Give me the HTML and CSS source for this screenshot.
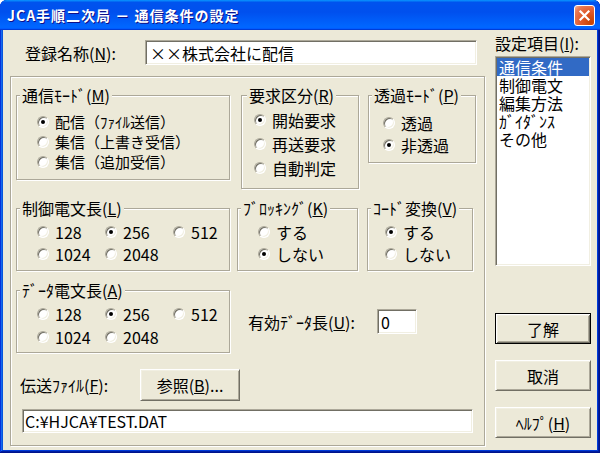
FILE: index.html
```html
<!DOCTYPE html>
<html lang="ja">
<head>
<meta charset="utf-8">
<title>JCA手順二次局 － 通信条件の設定</title>
<link rel="stylesheet" href="styles.css">
</head>
<body>
<div class="window">
  <div class="titlebar">
    <span class="title">JCA手順二次局 － 通信条件の設定</span>
    <span class="close"><svg width="13" height="13" viewBox="0 0 13 13"><path d="M2.5 2.5 L10.5 10.5 M10.5 2.5 L2.5 10.5" stroke="#fff" stroke-width="2.2" stroke-linecap="square" fill="none"/></svg></span>
  </div>
  <div class="client">
    <div class="main">
      <div class="name-row">
        <span class="name-label">登録名称(<u>N</u>):</span>
        <div class="field name-field">××株式会社に配信</div>
      </div>
      <div class="panel">
        <div class="grow">
          <div class="group g-mode">
            <div class="gtitle">通信ﾓｰﾄﾞ(<u>M</u>)</div>
            <div class="opts">
              <div class="opt"><span class="radio on"></span>配信（ﾌｧｲﾙ送信）</div>
              <div class="opt"><span class="radio"></span>集信（上書き受信）</div>
              <div class="opt"><span class="radio"></span>集信（追加受信）</div>
            </div>
          </div>
          <div class="group g-req">
            <div class="gtitle">要求区分(<u>R</u>)</div>
            <div class="opts">
              <div class="opt"><span class="radio on"></span>開始要求</div>
              <div class="opt"><span class="radio"></span>再送要求</div>
              <div class="opt"><span class="radio"></span>自動判定</div>
            </div>
          </div>
          <div class="group g-trans">
            <div class="gtitle">透過ﾓｰﾄﾞ(<u>P</u>)</div>
            <div class="opts">
              <div class="opt"><span class="radio"></span>透過</div>
              <div class="opt"><span class="radio on"></span>非透過</div>
            </div>
          </div>
        </div>
        <div class="grow row2">
          <div class="group g-ctl">
            <div class="gtitle">制御電文長(<u>L</u>)</div>
            <div class="opts grid3">
              <div class="opt"><span class="radio"></span>128</div>
              <div class="opt"><span class="radio on"></span>256</div>
              <div class="opt"><span class="radio"></span>512</div>
              <div class="opt"><span class="radio"></span>1024</div>
              <div class="opt"><span class="radio"></span>2048</div>
            </div>
          </div>
          <div class="group g-blk">
            <div class="gtitle">ﾌﾞﾛｯｷﾝｸﾞ(<u>K</u>)</div>
            <div class="opts">
              <div class="opt"><span class="radio"></span>する</div>
              <div class="opt"><span class="radio on"></span>しない</div>
            </div>
          </div>
          <div class="group g-code">
            <div class="gtitle">ｺｰﾄﾞ変換(<u>V</u>)</div>
            <div class="opts">
              <div class="opt"><span class="radio on"></span>する</div>
              <div class="opt"><span class="radio"></span>しない</div>
            </div>
          </div>
        </div>
        <div class="grow row3">
          <div class="group g-data">
            <div class="gtitle">ﾃﾞｰﾀ電文長(<u>A</u>)</div>
            <div class="opts grid3">
              <div class="opt"><span class="radio"></span>128</div>
              <div class="opt"><span class="radio on"></span>256</div>
              <div class="opt"><span class="radio"></span>512</div>
              <div class="opt"><span class="radio"></span>1024</div>
              <div class="opt"><span class="radio"></span>2048</div>
            </div>
          </div>
          <div class="valid">
            <span class="valid-label">有効ﾃﾞｰﾀ長(<u>U</u>):</span>
            <div class="field valid-field">0</div>
          </div>
        </div>
        <div class="file-row">
          <span class="file-label">伝送ﾌｧｲﾙ(<u>F</u>):</span>
          <button class="btn browse">参照(<u>B</u>)...</button>
        </div>
        <div class="field path-field">C:¥HJCA¥TEST.DAT</div>
      </div>
    </div>
    <div class="side">
      <div class="side-label">設定項目(<u>I</u>):</div>
      <div class="listbox">
        <div class="item sel">通信条件</div>
        <div class="item">制御電文</div>
        <div class="item">編集方法</div>
        <div class="item">ｶﾞｲﾀﾞﾝｽ</div>
        <div class="item">その他</div>
      </div>
      <div class="buttons">
        <button class="btn default">了解</button>
        <button class="btn">取消</button>
        <button class="btn">ﾍﾙﾌﾟ(<u>H</u>)</button>
      </div>
    </div>
  </div>
</div>
</body>
</html>
```

FILE: styles.css
```css
* { box-sizing: border-box; }
html, body { margin: 0; padding: 0; }
body {
  width: 600px;
  height: 453px;
  overflow: hidden;
  background: #ffffff;
  font-family: "Noto Sans CJK JP", sans-serif;
  font-size: 16px;
  line-height: 16px;
  color: #000;
}
u { text-decoration-thickness: 1px; text-underline-offset: 1px; }

.window {
  width: 600px;
  height: 453px;
  display: flex;
  flex-direction: column;
  background: #0831d9;
  border-radius: 7px 7px 0 0;
  box-shadow: inset -1px -1px #00138c, inset 1px 1px #0831d9, inset -2px -2px #001ea0, inset 2px 2px #166aee, inset -3px -3px #003bda, inset 3px 3px #0855dd;
}

.titlebar {
  height: 30px;
  flex: none;
  display: flex;
  justify-content: space-between;
  align-items: flex-start;
  padding: 5px 5px 0 7px;
  border-radius: 7px 7px 0 0;
  background: linear-gradient(180deg, #0997ff, #0053ee 8%, #0050ee 40%, #0066ff 88%, #0066ff 93%, #005bff 95%, #003dd7 96%, #003dd7);
}
.title {
  color: #fff;
  font-weight: 700;
  font-size: 14px;
  line-height: 21px;
  letter-spacing: 1px;
  text-shadow: 1px 1px #0f1089;
  white-space: nowrap;
}
.close {
  width: 21px;
  height: 21px;
  border: 1px solid #fff;
  border-radius: 3px;
  background: radial-gradient(circle at 85% 85%, #c54200 0%, #e0582a 45%, #e87a55 80%, #f3b59c 100%);
  display: flex;
  align-items: center;
  justify-content: center;
}

.client {
  flex: 1;
  margin: 0 3px 3px;
  background: #ece9d8;
  display: flex;
}

.main { width: 475px; margin-left: 7px; flex: none; }

.name-row { display: flex; align-items: center; margin-top: 10px; height: 25px; }
.name-label { width: 120px; margin-left: 15px; white-space: nowrap; }

.field {
  background: #fff;
  border: 1px solid;
  border-color: #aca899 #ffffff #ffffff #aca899;
  box-shadow: inset 1px 1px #716f64, inset -1px -1px #f1efe2;
  padding: 0 3px;
  display: flex;
  align-items: center;
  white-space: nowrap;
  overflow: hidden;
}
.name-field { width: 332px; height: 25px; padding-left: 4px; }

.panel {
  margin-top: 11px;
  height: 370px;
  border: 1px solid #aca899;
  box-shadow: inset 1px 1px #fff, 1px 1px #fff;
  padding: 18px 0 0 5px;
}

.grow { display: flex; align-items: flex-start; }
.row2 { margin-top: 19px; }
.row3 { margin-top: 19px; }

.group {
  flex: none;
  border: 1px solid #aca899;
  box-shadow: inset 1px 1px #fff, 1px 1px #fff;
}
.gtitle {
  width: fit-content;
  height: 16px;
  line-height: 16px;
  margin: -9px 0 0 3px;
  padding: 0 2px;
  background: #ece9d8;
  white-space: nowrap;
}
.g-req .gtitle { margin-left: 5px; }

.opt { display: flex; align-items: center; white-space: nowrap; }
.radio {
  flex: none;
  width: 12px;
  height: 12px;
  margin-right: 6px;
  border-radius: 50%;
  background: #fff;
  border: 1px solid;
  border-color: #aca899 #ffffff #ffffff #aca899;
  box-shadow: inset 1px 1px #716f64, inset -1px -1px #f1efe2;
  display: flex;
  align-items: center;
  justify-content: center;
}
.radio.on::after {
  content: "";
  width: 4px;
  height: 4px;
  border-radius: 50%;
  background: #000;
}

.g-mode { width: 214px; height: 85px; margin-right: 11px; }
.g-mode .opts { margin-top: 9px; padding-left: 20px; }
.g-mode .opt { height: 20px; font-size: 15px; }

.g-req { width: 118px; height: 94px; margin-right: 9px; }
.g-req .opts { margin-top: 5px; padding-left: 12px; }
.g-req .opt { height: 24px; }

.g-trans { width: 108px; height: 68px; }
.g-trans .opts { margin-top: 9px; padding-left: 14px; }
.g-trans .opt { height: 22px; }

.grid3 { display: grid; grid-template-columns: 68px 68px 68px; }

.g-ctl { width: 214px; height: 63px; margin-right: 7px; }
.g-ctl .opts { margin-top: 5px; padding-left: 20px; }
.g-ctl .opt { height: 22px; }

.g-blk { width: 121px; height: 63px; margin-right: 9px; }
.g-blk .opts { margin-top: 5px; padding-left: 20px; }
.g-blk .opt { height: 22px; }

.g-code { width: 106px; height: 63px; }
.g-code .opts { margin-top: 5px; padding-left: 17px; }
.g-code .opt { height: 22px; }

.g-data { width: 214px; height: 63px; }
.g-data .opts { margin-top: 4px; padding-left: 20px; }
.g-data .opt { height: 23px; }

.valid { display: flex; align-items: center; margin: 19px 0 0 18px; height: 25px; }
.valid-label { width: 129px; white-space: nowrap; }
.valid-field { width: 40px; height: 25px; }

.file-row { display: flex; align-items: center; margin-top: 16px; padding-left: 4px; height: 32px; }
.file-label { width: 120px; white-space: nowrap; }

.path-field { width: 451px; height: 24px; margin: 8px 0 0 6px; padding-left: 2px; }

.btn {
  font: inherit;
  color: #000;
  background: #ece9d8;
  border: 1px solid;
  border-color: #ffffff #716f64 #716f64 #ffffff;
  box-shadow: inset 1px 1px #f1efe2, inset -1px -1px #aca899;
  padding: 0;
  margin: 0;
  display: flex;
  align-items: center;
  justify-content: center;
  white-space: nowrap;
}
.btn.default {
  border-color: #000;
  box-shadow: inset 1px 1px #fff, inset -1px -1px #716f64, inset 2px 2px #f1efe2, inset -2px -2px #aca899;
}
.browse { width: 100px; height: 32px; }

.side { width: 96px; margin-left: 10px; flex: none; display: flex; flex-direction: column; }
.side-label { margin-top: 5px; height: 16px; line-height: 16px; white-space: nowrap; }
.listbox {
  margin-top: 5px;
  height: 210px;
  background: #fff;
  border: 1px solid;
  border-color: #aca899 #ffffff #ffffff #aca899;
  box-shadow: inset 1px 1px #716f64, inset -1px -1px #f1efe2;
  padding: 1px;
}
.item { height: 18px; line-height: 18px; padding-left: 2px; white-space: nowrap; }
.item.sel { background: #316ac5; color: #fff; }

.buttons { margin-top: 47px; display: flex; flex-direction: column; gap: 16px; }
.buttons .btn { width: 96px; height: 31px; }
```
